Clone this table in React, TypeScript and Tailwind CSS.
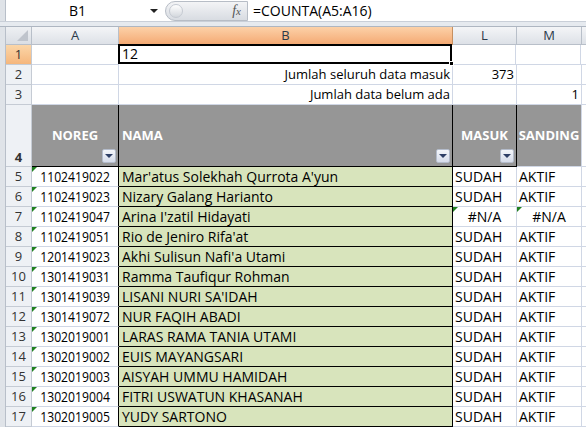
import React from "react";

type Row = { no: number; reg: string; nama: string; masuk: string; sanding: string };

const rows: Row[] = [
  { no: 5, reg: "1102419022", nama: "Mar'atus Solekhah Qurrota A'yun", masuk: "SUDAH", sanding: "AKTIF" },
  { no: 6, reg: "1102419023", nama: "Nizary Galang Harianto", masuk: "SUDAH", sanding: "AKTIF" },
  { no: 7, reg: "1102419047", nama: "Arina I'zatil Hidayati", masuk: "#N/A", sanding: "#N/A" },
  { no: 8, reg: "1102419051", nama: "Rio de Jeniro Rifa'at", masuk: "SUDAH", sanding: "AKTIF" },
  { no: 9, reg: "1201419023", nama: "Akhi Sulisun Nafi'a Utami", masuk: "SUDAH", sanding: "AKTIF" },
  { no: 10, reg: "1301419031", nama: "Ramma Taufiqur Rohman", masuk: "SUDAH", sanding: "AKTIF" },
  { no: 11, reg: "1301419039", nama: "LISANI NURI SA'IDAH", masuk: "SUDAH", sanding: "AKTIF" },
  { no: 12, reg: "1301419072", nama: "NUR FAQIH ABADI", masuk: "SUDAH", sanding: "AKTIF" },
  { no: 13, reg: "1302019001", nama: "LARAS RAMA TANIA UTAMI", masuk: "SUDAH", sanding: "AKTIF" },
  { no: 14, reg: "1302019002", nama: "EUIS MAYANGSARI", masuk: "SUDAH", sanding: "AKTIF" },
  { no: 15, reg: "1302019003", nama: "AISYAH UMMU HAMIDAH", masuk: "SUDAH", sanding: "AKTIF" },
  { no: 16, reg: "1302019004", nama: "FITRI USWATUN KHASANAH", masuk: "SUDAH", sanding: "AKTIF" },
  { no: 17, reg: "1302019005", nama: "YUDY SARTONO", masuk: "SUDAH", sanding: "AKTIF" },
];

// small green "number stored as text" marker
const Flag = () => (
  <span className="absolute left-0 top-0 w-0 h-0 border-t-[5px] border-t-[#208020] border-r-[5px] border-r-transparent" />
);

const FilterBtn = () => (
  <span className="absolute right-[2px] bottom-[3px] w-[14px] h-[14px] rounded-[2px] border border-[#b4bccb] bg-gradient-to-b from-[#f4f6fa] to-[#d6dcea] flex items-center justify-center">
    <span className="w-0 h-0 border-l-[4px] border-r-[4px] border-t-[4px] border-l-transparent border-r-transparent border-t-[#2e3f66]" />
  </span>
);

const RowHead = ({ n, active, h = "h-[20px]", bottom = false }: { n: number; active?: boolean; h?: string; bottom?: boolean }) => (
  <div
    className={`w-[26px] shrink-0 ${h} border-r border-b border-[#c5cbd4] flex justify-center text-[13px] ${bottom ? "items-end pb-[2px]" : "items-center"} text-[#333] ${
      active ? "bg-gradient-to-b from-[#fbd6a8] to-[#f5b67c]" : "bg-[#eef1f5]"
    }`}
  >
    {n}
  </div>
);

export default function App() {
  return (
    <div className="w-[586px] h-[428px] overflow-hidden bg-white text-[14px] leading-none text-black font-['Open_Sans','Noto_Sans',sans-serif]">
      {/* formula bar */}
      <div className="h-[22px] flex bg-[#e3e7ec] border-b border-[#c9cfd8]">
        <div className="w-[6px] shrink-0 bg-[#dfe3e8] border-r border-[#b8bfc9]" />
        <div className="w-[159px] shrink-0 bg-white flex items-center relative">
          <span className="w-full text-center pr-[16px] text-[14px]">B1</span>
          <span className="absolute right-[7px] top-[9px] w-0 h-0 border-l-[4px] border-r-[4px] border-t-[4px] border-l-transparent border-r-transparent border-t-[#222]" />
        </div>
        <div className="w-[83px] shrink-0 flex items-center bg-white">
          <div className="w-full h-[20px] rounded-l-full bg-gradient-to-b from-[#f3f4f6] to-[#d8dce2] border border-[#b7bdc6] flex items-center justify-between pl-[3px] pr-[6px]">
            <span className="w-[14px] h-[14px] rounded-full bg-gradient-to-b from-white to-[#d3d7dd] border border-[#c5cad2]" />
            <span className="italic font-['Liberation_Serif',serif] text-[14px] text-[#555]">
              f<span className="text-[11px]">x</span>
            </span>
          </div>
        </div>
        <div className="flex-1 bg-white flex items-center pl-[5px] text-[14px]">=COUNTA(A5:A16)</div>
      </div>
      <div className="h-[5px] bg-[#e6eaef] border-b border-[#aeb6c1]" />

      {/* column headers */}
      <div className="flex h-[18px] text-[#2b3a4a] text-[13px]">
        <div className="w-[6px] shrink-0 bg-[#dfe3e8] border-r border-[#b8bfc9]" />
        <div className="w-[26px] shrink-0 bg-gradient-to-b from-[#eef0f3] to-[#dadee4] border-r border-b border-[#b8bfc9] relative">
          <span className="absolute right-[3px] bottom-[3px] w-0 h-0 border-l-[11px] border-l-transparent border-b-[11px] border-b-[#bfc4cc]" />
        </div>
        <div className="w-[87px] shrink-0 bg-gradient-to-b from-[#f4f5f7] to-[#dde1e7] border-r border-b border-[#b8bfc9] flex items-center justify-center">A</div>
        <div className="w-[334px] shrink-0 bg-gradient-to-b from-[#fcd1a8] to-[#f4aa74] border-r border-b border-[#c69060] flex items-center justify-center">B</div>
        <div className="w-[64px] shrink-0 bg-gradient-to-b from-[#f4f5f7] to-[#dde1e7] border-r border-b border-[#b8bfc9] flex items-center justify-center">L</div>
        <div className="w-[65px] shrink-0 bg-gradient-to-b from-[#f4f5f7] to-[#dde1e7] border-r border-b border-[#b8bfc9] flex items-center justify-center">M</div>
        <div className="flex-1 bg-gradient-to-b from-[#f4f5f7] to-[#dde1e7] border-b border-[#b8bfc9]" />
      </div>

      {/* row 1 */}
      <div className="flex">
        <div className="w-[6px] shrink-0 bg-[#dfe3e8] border-r border-[#b8bfc9]" />
        <RowHead n={1} active />
        <div className="w-[87px] h-[20px] shrink-0 border-r border-b border-[#d0d7e5]" />
        <div className="w-[334px] h-[20px] shrink-0 border-2 border-black flex items-center pl-[2px] -ml-[1px] -mt-[1px] relative">
          12
          <span className="absolute -right-[4px] -bottom-[4px] w-[5px] h-[5px] bg-black border border-white" />
        </div>
        <div className="w-[64px] h-[20px] shrink-0 border-r border-b border-[#d0d7e5]" />
        <div className="w-[65px] h-[20px] shrink-0 border-r border-b border-[#d0d7e5]" />
        <div className="flex-1 h-[20px] border-b border-[#d0d7e5]" />
      </div>

      {/* row 2 */}
      <div className="flex">
        <div className="w-[6px] shrink-0 bg-[#dfe3e8] border-r border-[#b8bfc9]" />
        <RowHead n={2} />
        <div className="w-[87px] h-[20px] shrink-0 border-r border-b border-[#d0d7e5]" />
        <div className="w-[334px] h-[20px] shrink-0 border-r border-b border-[#d0d7e5] flex items-center justify-end pr-[2px] text-[13px]">Jumlah seluruh data masuk</div>
        <div className="w-[64px] h-[20px] shrink-0 border-r border-b border-[#d0d7e5] flex items-center justify-end pr-[2px] text-[13px]">373</div>
        <div className="w-[65px] h-[20px] shrink-0 border-r border-b border-[#d0d7e5]" />
        <div className="flex-1 h-[20px] border-b border-[#d0d7e5]" />
      </div>

      {/* row 3 */}
      <div className="flex">
        <div className="w-[6px] shrink-0 bg-[#dfe3e8] border-r border-[#b8bfc9]" />
        <RowHead n={3} />
        <div className="w-[87px] h-[20px] shrink-0 border-r border-b border-[#d0d7e5]" />
        <div className="w-[334px] h-[20px] shrink-0 border-r border-b border-[#d0d7e5] flex items-center justify-end pr-[2px] text-[13px]">Jumlah data belum ada</div>
        <div className="w-[64px] h-[20px] shrink-0 border-r border-b border-[#d0d7e5]" />
        <div className="w-[65px] h-[20px] shrink-0 border-r border-b border-[#d0d7e5] flex items-center justify-end pr-[2px] text-[13px]">1</div>
        <div className="flex-1 h-[20px] border-b border-[#d0d7e5]" />
      </div>

      {/* row 4: table header */}
      <div className="flex font-bold text-white text-[13px]">
        <div className="w-[6px] shrink-0 bg-[#dfe3e8] border-r border-[#b8bfc9]" />
        <RowHead n={4} h="h-[62px]" bottom />
        <div className="w-[87px] h-[62px] shrink-0 bg-[#969696] border-r border-b border-black flex items-center justify-center relative">
          NOREG
          <FilterBtn />
        </div>
        <div className="w-[334px] h-[62px] shrink-0 bg-[#969696] border-r border-b border-black flex items-center pl-[3px] relative">
          NAMA
          <FilterBtn />
        </div>
        <div className="w-[64px] h-[62px] shrink-0 bg-[#969696] border-r border-b border-black flex items-center justify-center relative">
          MASUK
          <FilterBtn />
        </div>
        <div className="w-[65px] h-[62px] shrink-0 bg-[#969696] border-r border-b border-[#d0d7e5] flex items-center justify-center">
          SANDING
        </div>
        <div className="flex-1 h-[62px] border-b border-[#d0d7e5]" />
      </div>

      {/* data rows */}
      {rows.map((r) => {
        const na = r.masuk === "#N/A";
        return (
          <div key={r.no} className="flex">
            <div className="w-[6px] shrink-0 bg-[#dfe3e8] border-r border-[#b8bfc9]" />
            <RowHead n={r.no} />
            <div className="w-[87px] h-[20px] shrink-0 border-r border-b border-r-black border-b-[#d0d7e5] flex items-center justify-center relative">
              <Flag />
              <span className="inline-block scale-x-[0.87]">{r.reg}</span>
            </div>
            <div className="w-[334px] h-[20px] shrink-0 bg-[#d8e4bc] border-r border-b border-black flex items-center pl-[3px]">
              {r.nama}
            </div>
            <div className={`w-[64px] h-[20px] shrink-0 border-r border-b border-[#d0d7e5] flex items-center relative ${na ? "justify-center" : "pl-[2px]"}`}>
              {na && <Flag />}
              {r.masuk}
            </div>
            <div className={`w-[65px] h-[20px] shrink-0 border-r border-b border-[#d0d7e5] flex items-center relative ${na ? "justify-center" : "pl-[2px]"}`}>
              {na && <Flag />}
              {r.sanding}
            </div>
            <div className="flex-1 h-[20px] border-b border-[#d0d7e5]" />
          </div>
        );
      })}
    </div>
  );
}
